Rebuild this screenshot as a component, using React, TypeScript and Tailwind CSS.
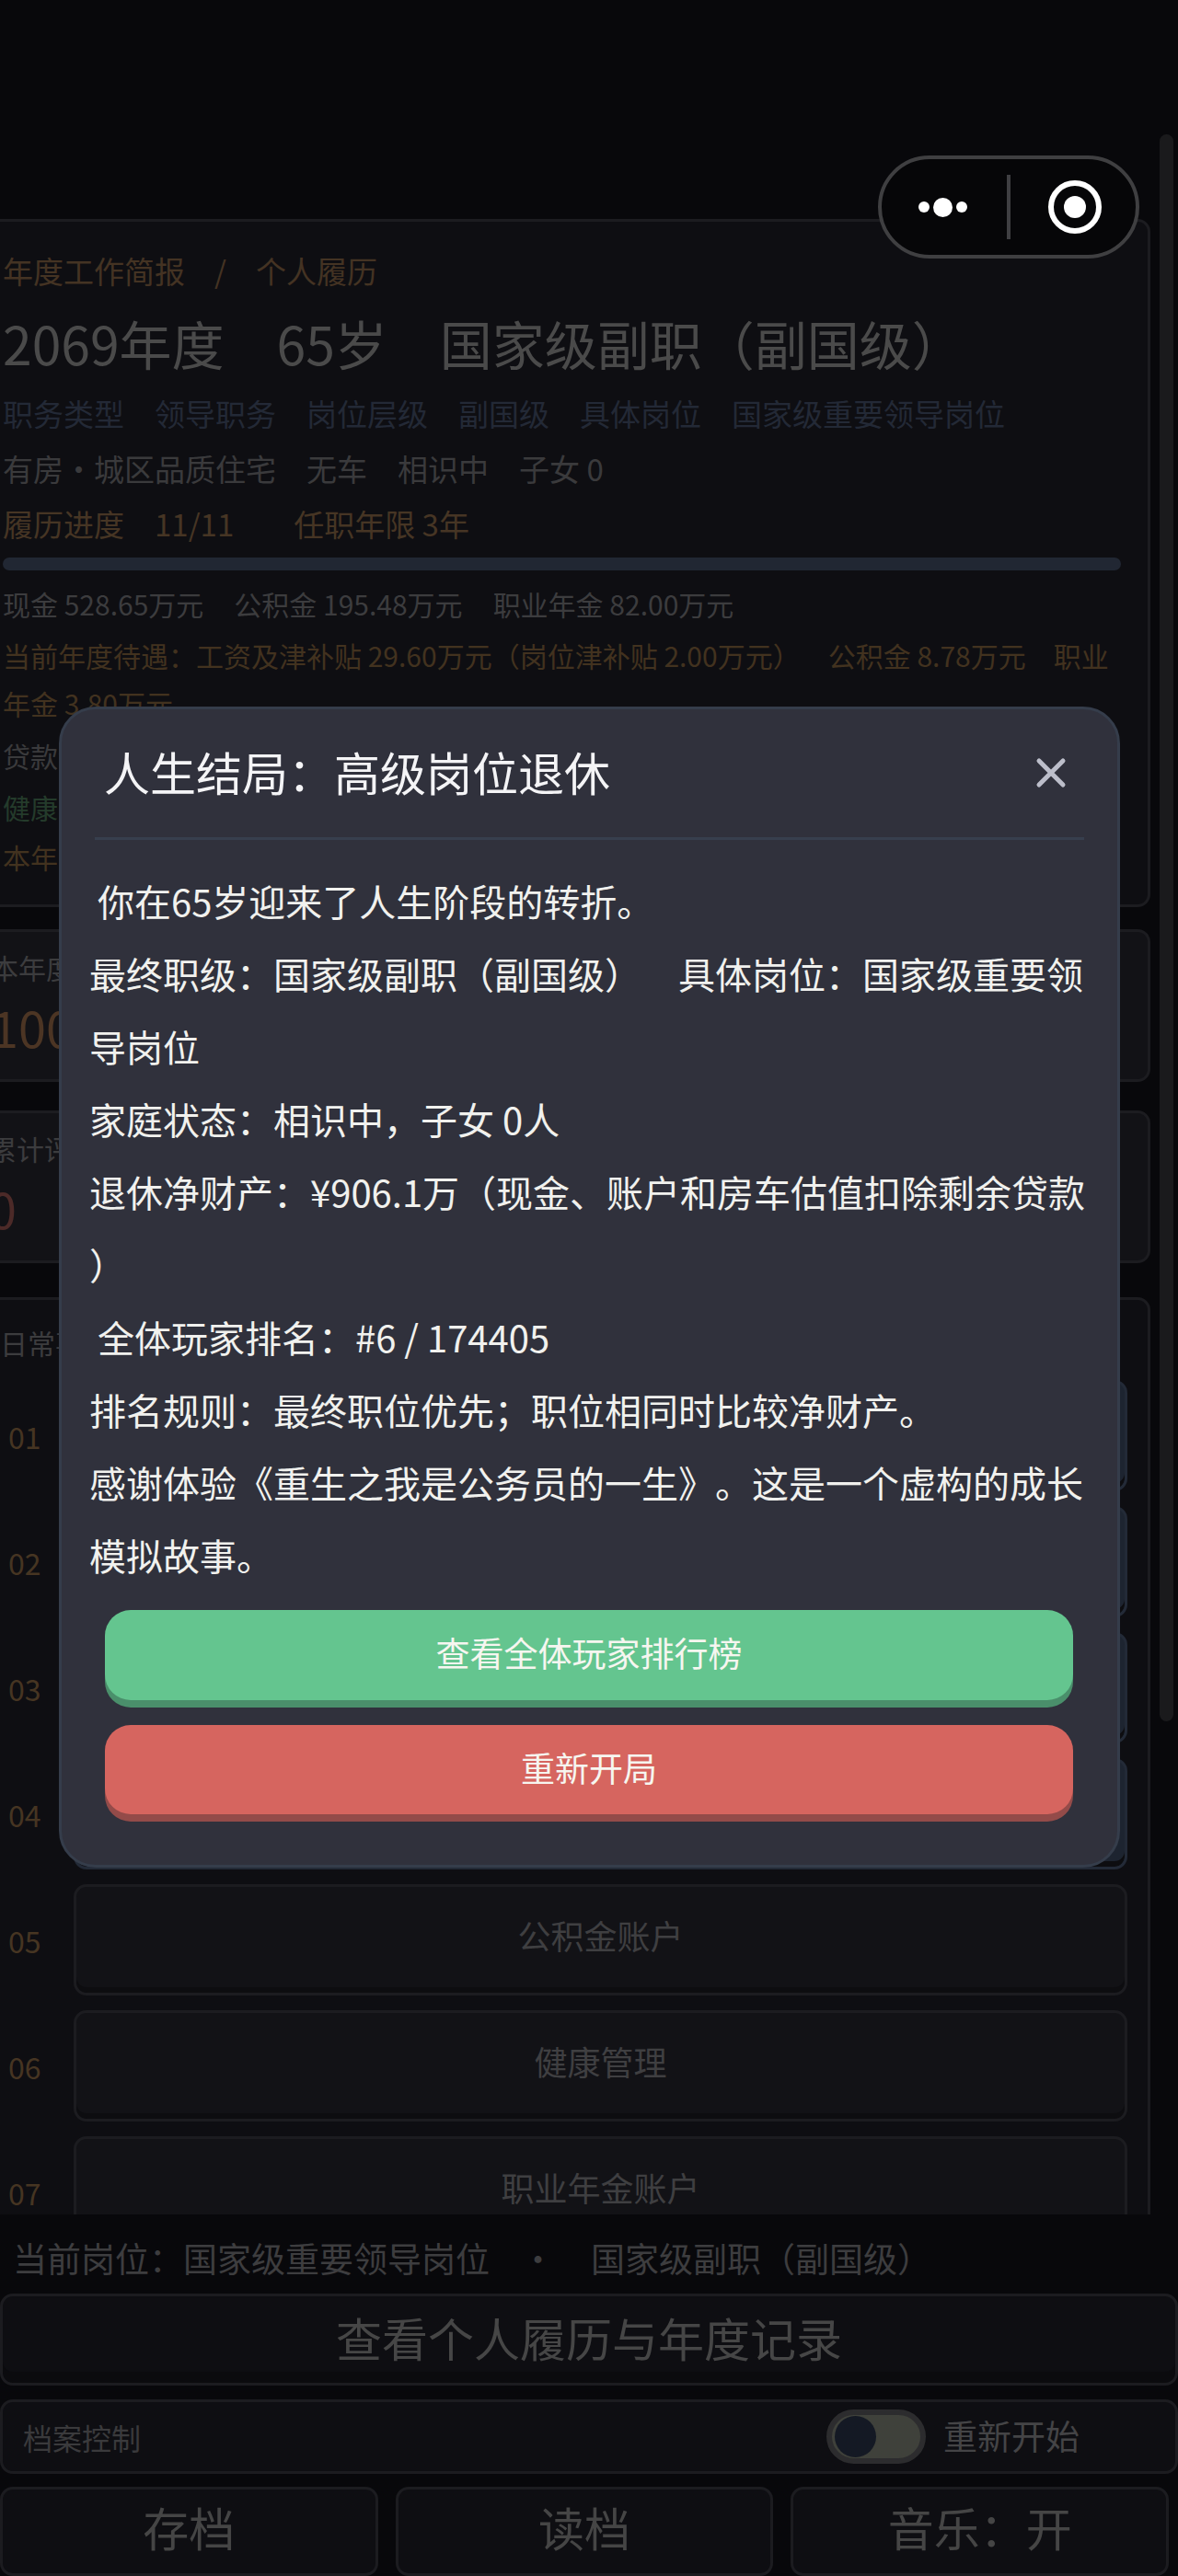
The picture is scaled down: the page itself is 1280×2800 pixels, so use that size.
import React from "react";

const ROWS = [
  { no: "01", label: "工作汇报" },
  { no: "02", label: "住房管理" },
  { no: "03", label: "车辆管理" },
  { no: "04", label: "现金账户" },
  { no: "05", label: "公积金账户" },
  { no: "06", label: "健康管理" },
  { no: "07", label: "职业年金账户" },
];

const ENDING_LINES = [
  " 你在65岁迎来了人生阶段的转折。",
  "最终职级：国家级副职（副国级）　具体岗位：国家级重要领导岗位",
  "家庭状态：相识中，子女 0人",
  "退休净财产：¥906.1万（现金、账户和房车估值扣除剩余贷款）",
  " 全体玩家排名：#6 / 174405",
  "排名规则：最终职位优先；职位相同时比较净财产。",
  "感谢体验《重生之我是公务员的一生》。这是一个虚构的成长模拟故事。",
];

function Capsule() {
  return (
    <div className="absolute left-[954px] top-[169px] z-10 flex h-[112px] w-[284px] items-center rounded-full border-4 border-[#3f3f41] bg-[#060608]">
      <div className="flex w-[136px] items-center justify-center gap-[4px] pr-[4px]">
        <span className="h-3 w-3 rounded-full bg-white" />
        <span className="h-[21px] w-[21px] rounded-full bg-white" />
        <span className="h-3 w-3 rounded-full bg-white" />
      </div>
      <div className="h-[70px] w-1 bg-[#3f3f42]" />
      <div className="flex flex-1 items-center justify-center pl-[3px]">
        <div className="flex h-[58px] w-[58px] items-center justify-center rounded-full border-[6px] border-white">
          <span className="h-6 w-6 rounded-full bg-white" />
        </div>
      </div>
    </div>
  );
}

function RoleRow({ no, label, hidden }: { no: string; label: string; hidden: boolean }) {
  return (
    <div className="flex items-center">
      <div className="w-[107px] pl-[36px] text-[32px] leading-[48px] text-[#463522]">{no}</div>
      <button
        className={`flex h-[121px] w-[1145px] items-center justify-center rounded-[14px] border-[3px] pb-[12px] text-[36px] shadow-[inset_0_-6px_0_#0d0d10] ${
          hidden ? "border-[#232a37] bg-[#1d2430] text-[#3a3a3e]" : "border-[#1c1c20] bg-[#121216] text-[#3f3f41]"
        }`}
      >
        {label}
      </button>
    </div>
  );
}

function EndingModal() {
  return (
    <div className="absolute left-[64px] top-[768px] z-20 h-[1262px] w-[1153px] rounded-[40px] border-[3px] border-[#353d4b] bg-[#30313c] px-[36px] pt-[25px]">
      <div className="flex h-[117px] items-start justify-between border-b-[3px] border-[#373f4e] pl-[10px] pr-[18px]">
        <h2 className="text-[50px] leading-[84px] font-normal text-[#f4f4f6]">人生结局：高级岗位退休</h2>
        <svg className="mt-[26px]" width="36" height="36" viewBox="0 0 36 36" fill="none" stroke="#bcbeca" strokeWidth="5" strokeLinecap="round">
          <path d="M5 5 L31 31 M31 5 L5 31" />
        </svg>
      </div>
      <div className="mt-[27px] w-[1084px] -ml-[6px] text-[40px] leading-[79px] whitespace-pre-wrap [line-break:anywhere] text-[#f1f1ee]">
        {ENDING_LINES.map((line) => (
          <p key={line}>{line}</p>
        ))}
      </div>
      <div className="mt-[20px] flex flex-col gap-[19px] px-[11px]">
        <button className="h-[98px] w-[1052px] rounded-[28px] bg-[#64c58f] pb-[4px] text-[37px] text-[#f6f6f0] shadow-[0_8px_0_#4a8f6b]">
          查看全体玩家排行榜
        </button>
        <button className="mt-[8px] h-[97px] w-[1052px] rounded-[28px] bg-[#d6655f] pb-[4px] text-[37px] text-[#f6f6f0] shadow-[0_8px_0_#934b49]">
          重新开局
        </button>
      </div>
    </div>
  );
}

export default function App() {
  return (
    <div className="relative h-[2800px] w-[1280px] overflow-hidden bg-[#08080b] font-['Noto_Sans_CJK_SC',sans-serif] [text-spacing-trim:space-all]">
      <Capsule />
      <EndingModal />
      {/* scroll thumb */}
      <div className="absolute left-[1260px] top-[146px] h-[1725px] w-[15px] rounded-full bg-[#1a1a1c]" />

      <main className="h-[2407px] overflow-hidden pt-[238px]">
        <div className="-ml-[30px] flex w-[1280px] flex-col">
          {/* Profile */}
          <section className="h-[748px] rounded-[14px] border-[3px] border-[#1c1c20] bg-[#0e0e12] pl-[30px] pr-[30px] pt-[26px]">
            <div className="text-[33px] leading-[54px] text-[#443323]">
              年度工作简报<span className="mx-[32px]">/</span>个人履历
            </div>
            <div className="text-[57px] leading-[103px] whitespace-pre text-[#4a4a4a]">
              2069年度{"　"}65岁{"　"}国家级副职（副国级）
            </div>
            <div className="flex gap-[33px] text-[33px] leading-[50px] text-[#232936]">
              <span>职务类型</span>
              <span>领导职务</span>
              <span>岗位层级</span>
              <span>副国级</span>
              <span>具体岗位</span>
              <span>国家级重要领导岗位</span>
            </div>
            <div className="flex gap-[33px] text-[33px] leading-[70px] text-[#3a3a3c]">
              <span>有房・城区品质住宅</span>
              <span>无车</span>
              <span>相识中</span>
              <span>子女 0</span>
            </div>
            <div className="flex text-[33px] leading-[50px] text-[#463524]">
              <span className="mr-[65px]">履历进度　11/11</span>
              <span>任职年限 3年</span>
            </div>
            <div className="mt-[12px] h-[14px] w-[1215px] rounded-full bg-[#212733]" />
            <div className="mt-[10px] flex gap-[33px] text-[30px] leading-[52px] text-[#3c3c3e]">
              <span>现金 528.65万元</span>
              <span>公积金 195.48万元</span>
              <span>职业年金 82.00万元</span>
            </div>
            <p className="mt-[4px] w-[1215px] whitespace-pre-wrap text-[30px] leading-[52px] text-[#42321f]">
              当前年度待遇：工资及津补贴 29.60万元（岗位津补贴 2.00万元）　公积金 8.78万元　职业年金 3.80万元
            </p>
            <p className="mt-[5px] text-[30px] leading-[52px] text-[#3a3a3c]">贷款余额 0万元</p>
            <p className="mt-[4px] text-[30px] leading-[52px] text-[#243b2b]">健康状态 良好</p>
            <p className="mt-[2px] text-[30px] leading-[52px] text-[#42321f]">本年收入 29.60万元</p>
          </section>

          {/* Yearly */}
          <section className="mt-[24px] h-[166px] rounded-[14px] border-[3px] border-[#1c1c20] bg-[#121216] pl-[17px] pt-[16px]">
            <div className="text-[30px] leading-[44px] text-[#3c3c3e]">本年度评价</div>
            <div className="text-[54px] leading-[86px] text-[#4c3524]">100</div>
          </section>

          {/* Total */}
          <section className="mt-[31px] h-[166px] rounded-[14px] border-[3px] border-[#1c1c20] bg-[#121216] pl-[15px] pt-[16px]">
            <div className="text-[30px] leading-[44px] text-[#3c3c3e]">累计评价</div>
            <div className="text-[54px] leading-[86px] text-[#4c2a28]">0</div>
          </section>

          {/* Daily */}
          <section className="mt-[37px] rounded-[14px] border-[3px] border-[#1c1c20] bg-[#0e0e12] pl-[27px] pt-[24px]">
            <div className="text-[30px] leading-[44px] text-[#3c3c3e]">日常事务</div>
            <div className="mt-[19px] -ml-[27px] flex flex-col gap-[16px]">
              {ROWS.map((row, i) => (
                <RoleRow key={row.no} no={row.no} label={row.label} hidden={i < 4} />
              ))}
            </div>
          </section>
        </div>
      </main>

      <footer className="flex h-[393px] flex-col bg-[#08080b]">
        <div className="mt-[22px] flex pl-[14px] text-[37px] leading-[50px] whitespace-pre text-[#3d3d3f]">
          <span>当前岗位：国家级重要领导岗位</span>
          <span className="ml-[34px] mr-[39px]">·</span>
          <span>国家级副职（副国级）</span>
        </div>
        <button className="mt-[14px] h-[100px] w-[1280px] rounded-[14px] border-[3px] border-[#1c1c20] bg-[#0e0e12] pb-[6px] text-[50px] text-[#464646] shadow-[inset_0_-12px_0_#0b0b0e]">
          查看个人履历与年度记录
        </button>
        <div className="mt-[15px] flex h-[81px] w-[1280px] items-center rounded-[14px] border-[3px] border-[#1c1c20] bg-[#0e0e12] pl-[22px]">
          <span className="text-[32px] text-[#3a3a3c]">档案控制</span>
          <div className="ml-[745px] flex h-[59px] w-[108px] items-center rounded-full border-[6px] border-[#2c2c2e] bg-[#3f413b] pl-[3px]">
            <span className="h-[45px] w-[45px] rounded-full bg-[#141924]" />
          </div>
          <span className="ml-[19px] pb-[2px] text-[37px] text-[#444446]">重新开始</span>
        </div>
        <div className="mt-[14px] flex w-[1270px] gap-[19px]">
          {["存档", "读档", "音乐：开"].map((label) => (
            <button
              key={label}
              className="h-[97px] flex-1 rounded-[14px] border-[3px] border-[#1c1c20] bg-[#0e0e12] pb-[10px] text-[50px] text-[#454545]"
            >
              {label}
            </button>
          ))}
        </div>
      </footer>
    </div>
  );
}
